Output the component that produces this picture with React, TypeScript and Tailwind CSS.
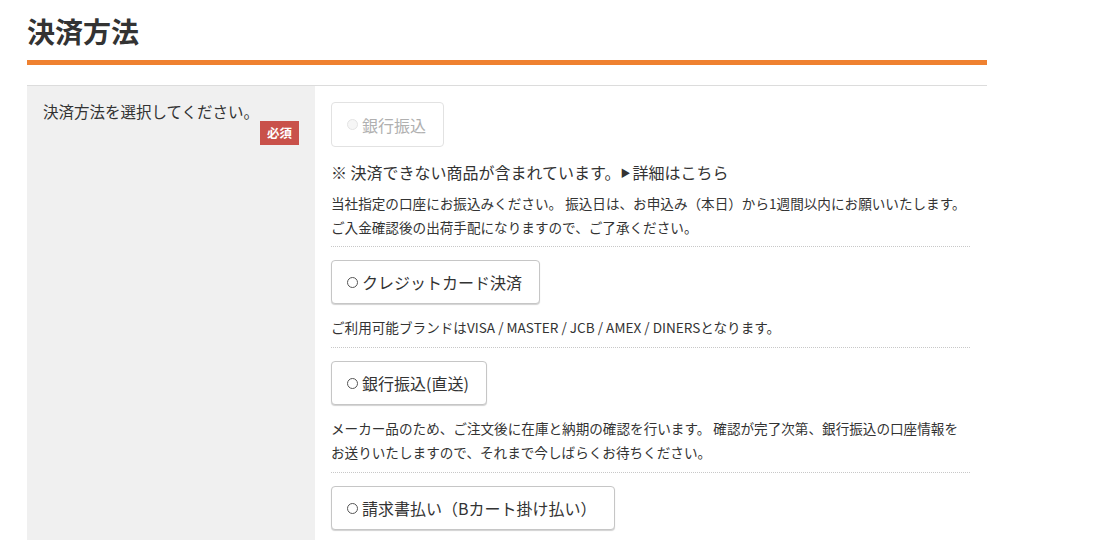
import React from "react";

const font = { fontFamily: '"Noto Sans CJK JP", "Noto Sans", sans-serif' };

function Radio({ label, disabled }: { label: string; disabled?: boolean }) {
  return (
    <div
      className={
        "inline-flex items-center pl-[15px] border rounded-[4px] bg-white text-[16px] leading-none " +
        (disabled
          ? "h-[45px] pr-[17px] border-[#e2e2e2] text-[#b0b0b0]"
          : "h-[44px] pr-[17px] border-[#c6c6c6] text-[#333] shadow-[0_1px_1px_rgba(0,0,0,0.18)]")
      }
    >
      {disabled ? (
        <span className="w-[11px] h-[11px] rounded-full border border-[#e4e4e4] bg-[#f6f6f6]" />
      ) : (
        <span className="w-[11px] h-[11px] rounded-full border border-[#555]" />
      )}
      <span className="ml-[4px]">{label}</span>
    </div>
  );
}

export default function App() {
  return (
    <div className="bg-white min-h-[540px] text-[#333]" style={font}>
      <div className="w-[960px] ml-[27px]">
        <h2 className="pt-[14px] text-[28px] font-bold leading-[34px] text-[#333]">決済方法</h2>
        <div className="mt-[12px] h-[5px] bg-[#ef8130]" />
        <div className="mt-[20px] border-t border-[#dcdcdc] flex min-h-[460px]">
          <div className="w-[288px] bg-[#f0f0f0] pl-[16px] pr-[16px] pt-[14px]">
            <div className="text-[15.5px] leading-[22px]">決済方法を選択してください。</div>
            <div className="flex justify-end mt-[-1px]">
              <span className="inline-flex items-center justify-center w-[39px] h-[24px] bg-[#c9514a] text-white text-[12.5px] font-bold">
                必須
              </span>
            </div>
          </div>
          <div className="flex-1 pl-[16px] pr-[17px] pt-[16px]">
            <div className="pb-[7px] border-b border-dotted border-[#c8c8c8]">
              <Radio label="銀行振込" disabled />
              <div className="mt-[12px] text-[16px] leading-[26px]">
                ※ 決済できない商品が含まれています。
                <span className="text-[10px] align-[2px] mr-[2px]">▶</span>詳細はこちら
              </div>
              <div className="mt-[5px] text-[13.6px] leading-[24px]">
                当社指定の口座にお振込みください。 振込日は、お申込み（本日）から1週間以内にお願いいたします。
                <br />
                ご入金確認後の出荷手配になりますので、ご了承ください。
              </div>
            </div>
            <div className="pt-[13px] pb-[8px] border-b border-dotted border-[#c8c8c8]">
              <Radio label="クレジットカード決済" />
              <div className="mt-[11px] text-[13.6px] leading-[24px]">
                ご利用可能ブランドはVISA / MASTER / JCB / AMEX / DINERSとなります。
              </div>
            </div>
            <div className="pt-[13px] pb-[8px] border-b border-dotted border-[#c8c8c8]">
              <Radio label="銀行振込(直送)" />
              <div className="mt-[11px] text-[13.6px] leading-[24px]">
                メーカー品のため、ご注文後に在庫と納期の確認を行います。 確認が完了次第、銀行振込の口座情報を
                <br />
                お送りいたしますので、それまで今しばらくお待ちください。
              </div>
            </div>
            <div className="pt-[13px]">
              <Radio label="請求書払い（Bカート掛け払い）" />
            </div>
          </div>
        </div>
      </div>
    </div>
  );
}
